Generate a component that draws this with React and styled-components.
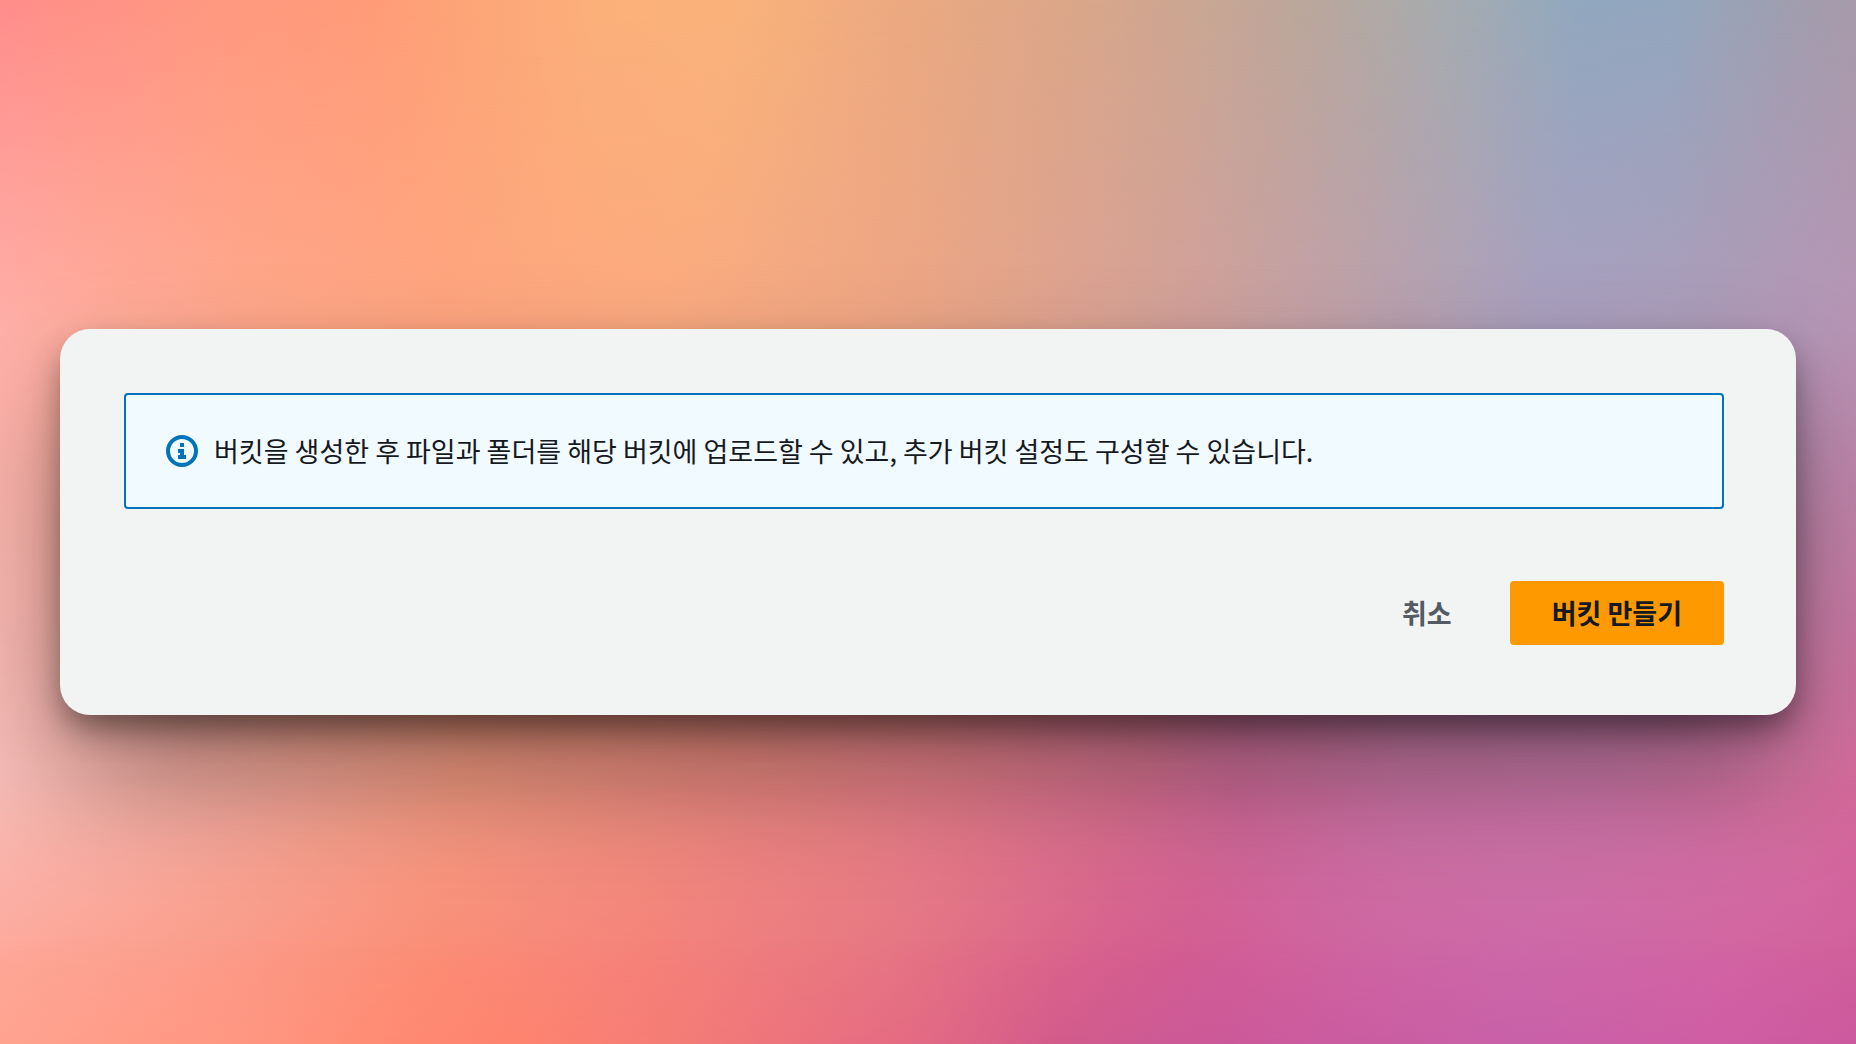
import React from 'react';
import styled, { createGlobalStyle } from 'styled-components';

const GlobalStyle = createGlobalStyle`
  body {
    margin: 0;
    color: #16191f;
    font-family: "Noto Sans CJK KR", "Noto Sans", sans-serif;
  }
`;

const Page = styled.main`
  display: grid;
  min-height: 100vh;
  overflow: hidden;
  > * {
    grid-area: 1 / 1;
  }
`;

// horizontal colour bands, each one fades in over the band above it
const bands = [
  {
    colors: '#ff8d8b, #ff9980 12%, #ff9c78 20%, #fbb079 32%, #fbb37a 39%, #eba981 49%, #d6a68c 60%, #b9a79d 71%, #a6acb0 78%, #91a8bf 85%, #93a7bf 90%, #9f9fb0 96%, #a89bab',
    fade: '#000, #000',
  },
  {
    colors: '#ffb0a8, #ffa88c 13%, #ffa57f 24%, #fbaa80 36%, #eba586 50%, #d2a09a 64%, #b8a0b0 76%, #aa9fbf 83%, #ac9dbb 90%, #b794b4',
    fade: 'transparent, #000 32%',
  },
  {
    colors: '#f6bdb8, #f3aa9f 12%, #f39a82 25%, #ec8a80 38%, #e57e88 50%, #d56f90 62%, #cd6a98 67%, #c974a3 76%, #cb76a6 86%, #d4729f 96%, #d66a9c',
    fade: 'transparent 32%, #000 76%',
  },
  {
    colors: '#fea799, #fb9b88 12%, #fb8d76 23%, #f5827a 35%, #e67683 48%, #d75f8e 60%, #d35c92 64%, #cf64a2 73%, #cd68a8 82%, #d264a3 93%, #d0609c',
    fade: 'transparent 74%, #000 93%',
  },
  {
    colors: '#ffa38f, #ff9580 14%, #ff8971 22%, #fe836f 28%, #f27a78 38%, #e26984 50%, #d25b8b 57%, #cb599a 66%, #c961a8 82%, #cf5ea4 92%, #cb599d',
    fade: 'transparent 90%, #000',
  },
];

const Band = styled.div`
  background: linear-gradient(to right, ${props => props.$colors});
  mask-image: linear-gradient(to bottom, ${props => props.$fade});
`;

const Card = styled.section`
  align-self: center;
  z-index: 1;
  margin: 0 60px;
  padding: 64px 72px 70px 64px;
  border-radius: 30px;
  background: #f2f4f3;
  box-shadow: 0 60px 120px -8px rgba(0, 0, 0, 0.4), 0 16px 32px -4px rgba(0, 0, 0, 0.45);
`;

const Alert = styled.div`
  display: flex;
  align-items: center;
  gap: 16px;
  padding: 34px 40px;
  border: 2px solid #0073bb;
  border-radius: 4px;
  background: #f1faff;
`;

const AlertText = styled.p`
  margin: 0;
  font-size: 27px;
  line-height: 44px;
`;

const Actions = styled.div`
  display: flex;
  justify-content: flex-end;
  gap: 16px;
  margin-top: 72px;
`;

const Button = styled.button`
  height: 64px;
  padding: 0 42px;
  border: 0;
  border-radius: 4px;
  background: ${props => (props.$primary ? '#ff9900' : 'transparent')};
  color: ${props => (props.$primary ? '#16191f' : '#545b64')};
  font: inherit;
  font-size: 27px;
  font-weight: 700;
  line-height: 44px;
  cursor: pointer;
`;

const InfoIcon = () => (
  <svg width="32" height="32" viewBox="0 0 32 32" fill="#0073bb" aria-hidden="true">
    <circle cx="16" cy="16" r="14" fill="none" stroke="#0073bb" strokeWidth="4" />
    <path d="M14 8h4v4h-4zM12 14h6v6h2v4h-8v-4h2v-2h-2z" />
  </svg>
);

const App = () => (
  <Page>
    <GlobalStyle />
    {bands.map(band => (
      <Band $colors={band.colors} $fade={band.fade} key={band.colors} />
    ))}
    <Card>
      <Alert role="status">
        <InfoIcon />
        <AlertText>
          버킷을 생성한 후 파일과 폴더를 해당 버킷에 업로드할 수 있고, 추가 버킷 설정도 구성할 수 있습니다.
        </AlertText>
      </Alert>
      <Actions>
        <Button type="button">취소</Button>
        <Button type="button" $primary>버킷 만들기</Button>
      </Actions>
    </Card>
  </Page>
);

export default App;
